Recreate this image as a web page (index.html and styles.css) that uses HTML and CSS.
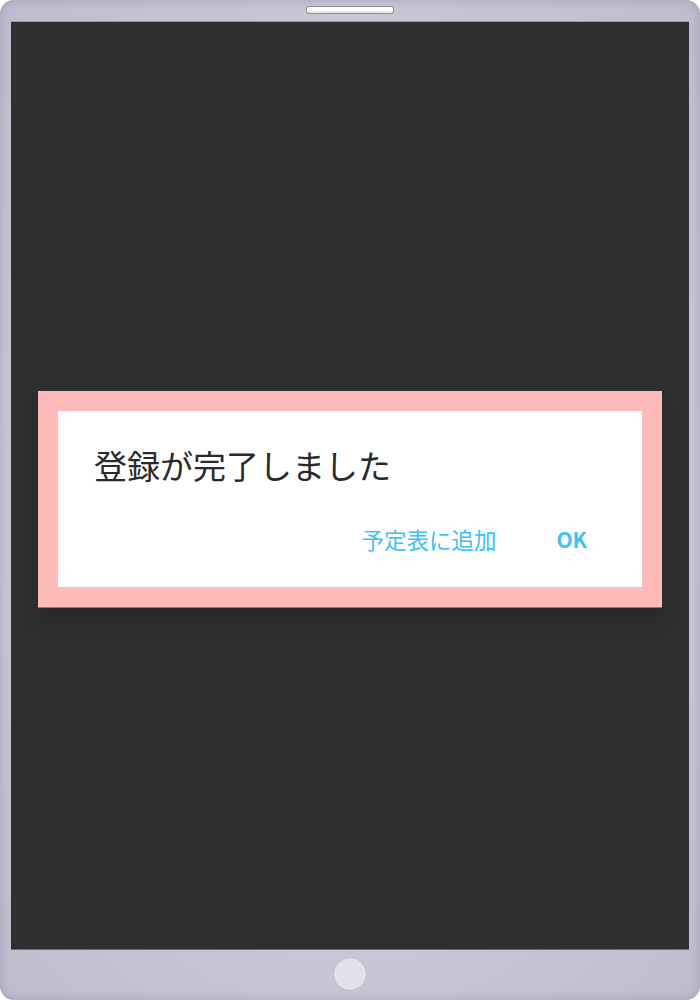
FILE: index.html
```html
<!DOCTYPE html>
<html lang="ja">
<head>
<meta charset="utf-8">
<title>登録完了</title>
<link rel="stylesheet" href="styles.css">
</head>
<body>
<div class="device">
  <div class="top-bezel"><div class="speaker"></div></div>
  <div class="screen">
    <div class="dialog">
      <div class="dialog-body">
        <p class="title">登録が完了しました</p>
        <div class="actions">
          <button class="btn">予定表に追加</button>
          <button class="btn btn-ok">OK</button>
        </div>
      </div>
    </div>
  </div>
  <div class="bottom-bezel"><div class="home"></div></div>
</div>
</body>
</html>
```
FILE: styles.css
```css
html, body {
  margin: 0;
  padding: 0;
  background: #ffffff;
}
body {
  font-family: "Noto Sans CJK JP", "Noto Sans", sans-serif;
}
.device {
  width: 700px;
  height: 1000px;
  box-sizing: border-box;
  border-radius: 14px;
  background: radial-gradient(ellipse at center, #c9c8d7 60%, #bdbccd 100%);
  box-shadow: inset 0 0 10px rgba(110, 108, 140, 0.35);
  display: flex;
  flex-direction: column;
  overflow: hidden;
}
.top-bezel {
  height: 21px;
  display: flex;
  justify-content: center;
  padding-top: 7px;
  box-sizing: border-box;
}
.speaker {
  width: 86px;
  height: 6px;
  border-radius: 3px;
  background: linear-gradient(#fafafa, #ffffff 50%, #dcdcdc);
  border: 1px solid #8d8d95;
  box-sizing: content-box;
  margin-top: -1px;
}
.screen {
  margin: 0 11px;
  height: 929px;
  box-sizing: border-box;
  border-top: 1px solid #9a9a9e;
  border-bottom: 1px solid #6e6e74;
  background: #2f2f2f;
  padding: 369px 27px 0;
}
.dialog {
  background: #ffbaba;
  padding: 20px;
  box-shadow: 0 14px 18px rgba(0, 0, 0, 0.16);
  border-bottom: 1px solid #8a7a7a;
  margin-bottom: -1px;
}
.dialog-body {
  background: #ffffff;
  height: 176px;
  box-sizing: border-box;
  padding: 34px 55px 0 36px;
}
.title {
  margin: 0;
  font-size: 33px;
  line-height: 40px;
  color: #2a2a2a;
  font-weight: 400;
}
.actions {
  display: flex;
  justify-content: flex-end;
  align-items: center;
  gap: 60px;
  margin-top: 39px;
}
.btn {
  border: none;
  background: none;
  padding: 0;
  margin: 0;
  font-family: "Noto Sans CJK JP", "Noto Sans", sans-serif;
  font-size: 22.5px;
  line-height: 30px;
  color: #40c0f4;
  cursor: pointer;
}
.btn-ok {
  font-weight: 700;
  font-size: 21px;
}
.bottom-bezel {
  flex: 1;
  display: flex;
  justify-content: center;
  align-items: flex-start;
  padding-top: 8px;
}
.home {
  width: 32px;
  height: 32px;
  border-radius: 50%;
  background: #e1e1e9;
  box-shadow: 0 0 1px rgba(120, 120, 140, 0.5);
}
```
